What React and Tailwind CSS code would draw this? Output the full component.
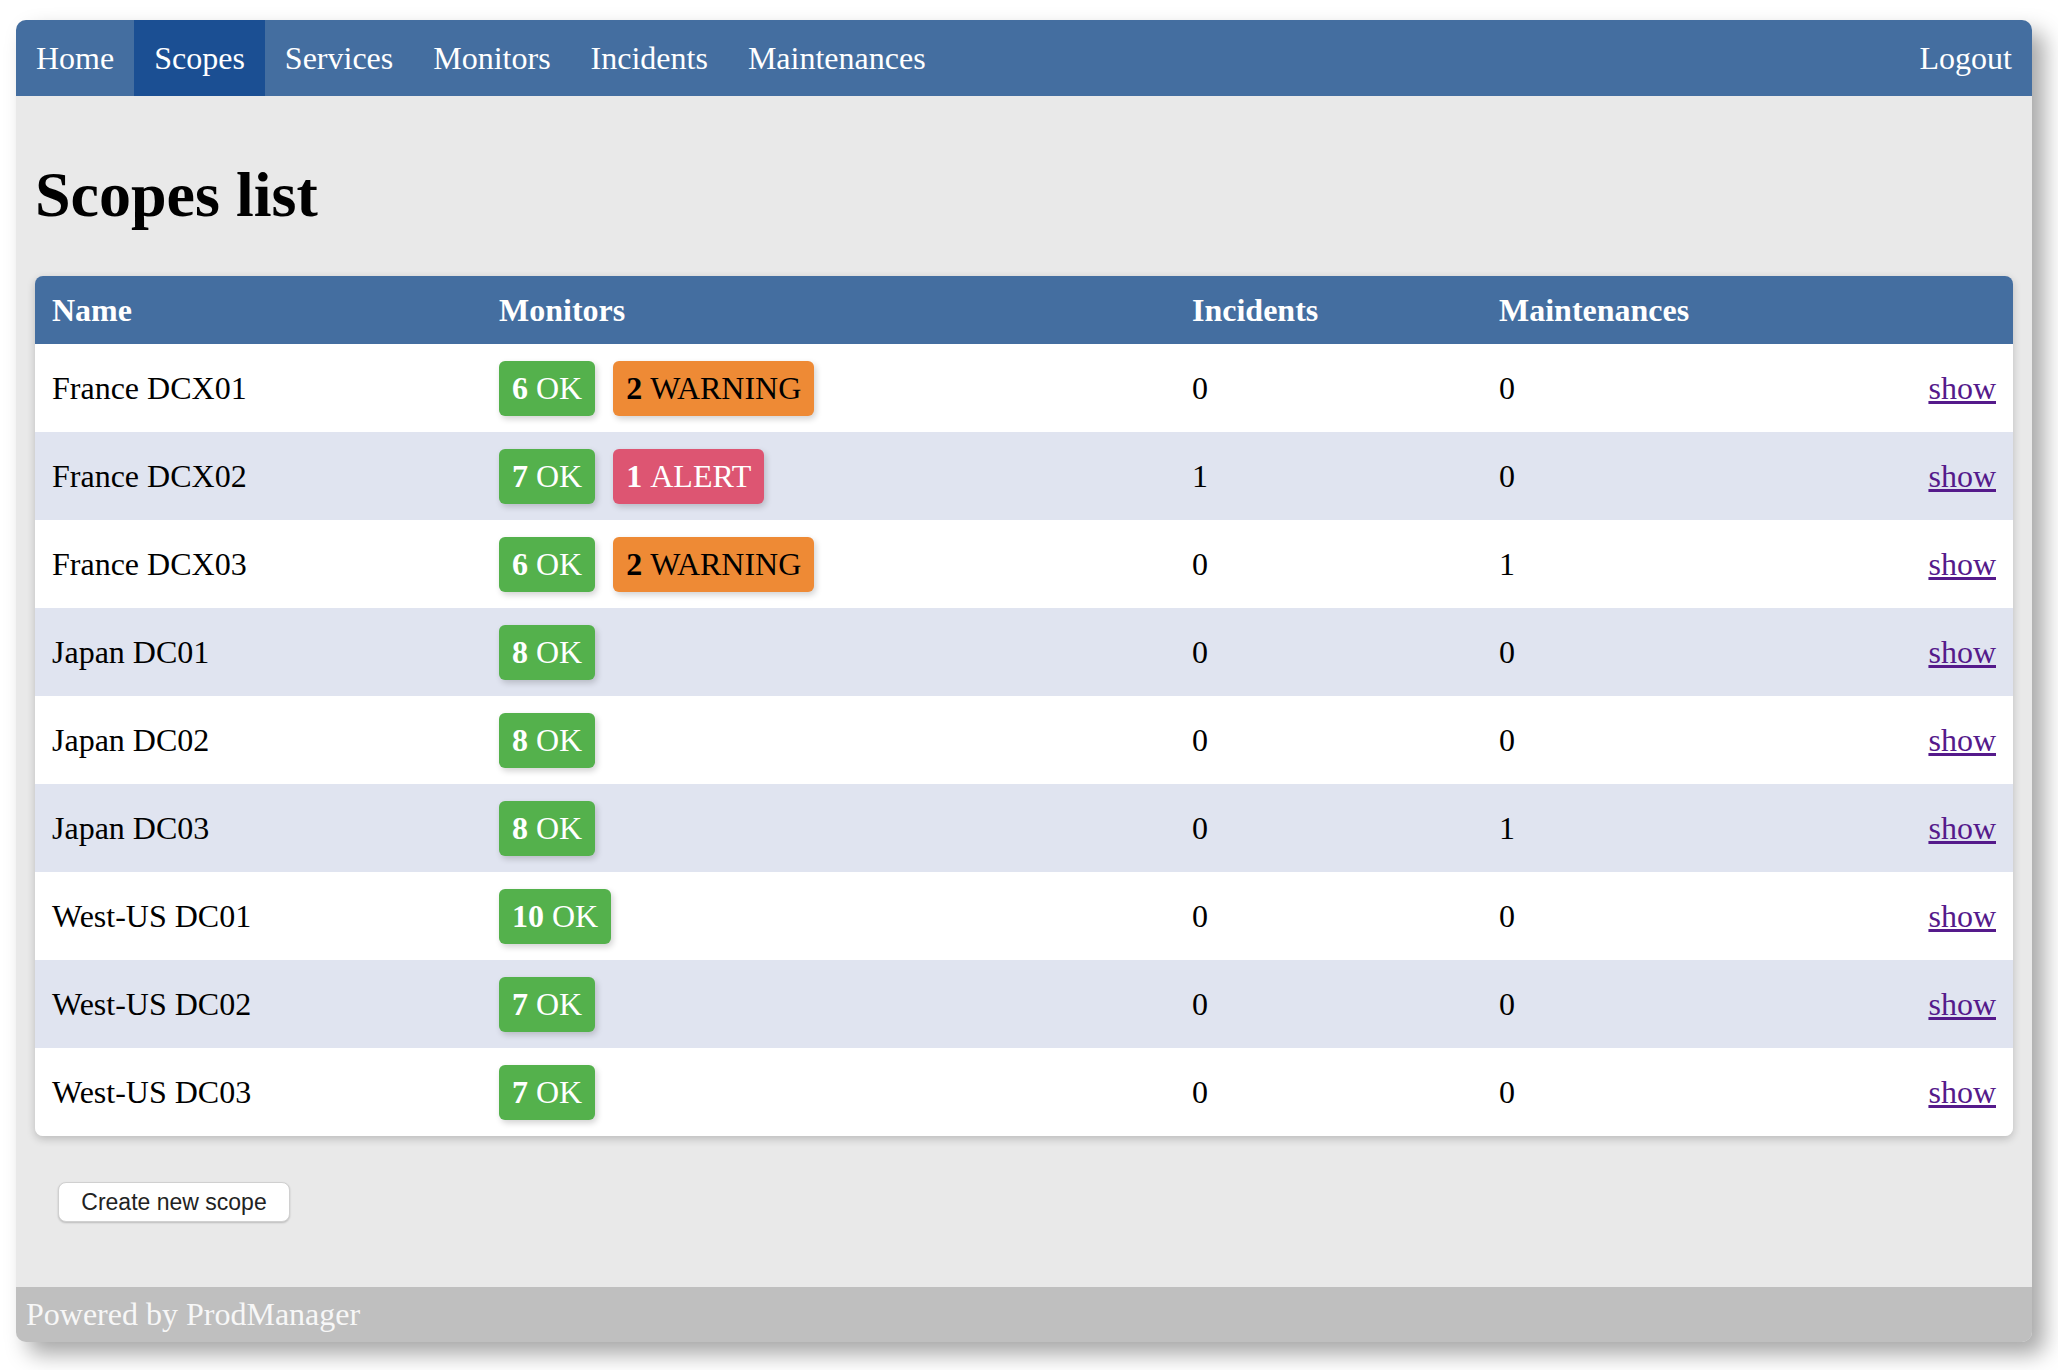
import React from 'react';

const navLinks = ['Home', 'Scopes', 'Services', 'Monitors', 'Incidents', 'Maintenances'];

const scopes = [
  { name: 'France DCX01', ok: 6, warn: 2, incidents: 0, maint: 0 },
  { name: 'France DCX02', ok: 7, alert: 1, incidents: 1, maint: 0 },
  { name: 'France DCX03', ok: 6, warn: 2, incidents: 0, maint: 1 },
  { name: 'Japan DC01', ok: 8, incidents: 0, maint: 0 },
  { name: 'Japan DC02', ok: 8, incidents: 0, maint: 0 },
  { name: 'Japan DC03', ok: 8, incidents: 0, maint: 1 },
  { name: 'West-US DC01', ok: 10, incidents: 0, maint: 0 },
  { name: 'West-US DC02', ok: 7, incidents: 0, maint: 0 },
  { name: 'West-US DC03', ok: 7, incidents: 0, maint: 0 },
];

function Badge({ count, label, color }) {
  return (
    <span className={`inline-flex items-center h-[55px] px-[13px] rounded-[6px] shadow-[2px_3px_6px_rgba(0,0,0,0.18)] ${color}`}>
      <b>{count}</b>&nbsp;{label}
    </span>
  );
}

export default function App() {
  return (
    <div className="min-h-[1370px] bg-white pt-[20px] pl-[16px]" style={{ fontFamily: '"Liberation Serif", "Times New Roman", serif' }}>
      <div className="w-[2016px] rounded-[10px] bg-[#e9e9e9] shadow-[12px_12px_22px_rgba(0,0,0,0.35)] overflow-hidden text-[32px]">

        {/* Nav */}
        <nav className="flex h-[76px] bg-[#446ea0] text-white">
          {navLinks.map((l) => (
            <a key={l} className={`flex items-center px-[20px] ${l === 'Scopes' ? 'bg-[#1b4f93]' : ''}`}>{l}</a>
          ))}
          <a className="ml-auto flex items-center px-[20px]">Logout</a>
        </nav>

        {/* Content */}
        <div className="px-[19px] pt-[20px] pb-[64px]">
          <h1 className="text-[64px] leading-[74px] font-bold mt-[42px] mb-[44px] text-black">Scopes list</h1>

          <table className="w-full table-fixed border-separate border-spacing-0 rounded-[8px] overflow-hidden shadow-[0_3px_8px_rgba(0,0,0,0.2)]">
            <colgroup>
              <col className="w-[447px]" />
              <col className="w-[693px]" />
              <col className="w-[307px]" />
              <col className="w-[300px]" />
              <col />
            </colgroup>
            <thead>
              <tr className="h-[68px] bg-[#446ea0] text-white text-left">
                <th className="pl-[17px] font-bold">Name</th>
                <th className="pl-[17px] font-bold">Monitors</th>
                <th className="pl-[17px] font-bold">Incidents</th>
                <th className="pl-[17px] font-bold">Maintenances</th>
                <th></th>
              </tr>
            </thead>
            <tbody>
              {scopes.map((s, i) => (
                <tr key={s.name} className={`h-[88px] ${i % 2 === 1 ? 'bg-[#e0e4f0]' : 'bg-white'}`}>
                  <td className="pl-[17px]">{s.name}</td>
                  <td className="pl-[17px]">
                    <div className="flex gap-[18px]">
                      <Badge count={s.ok} label="OK" color="bg-[#54b14c] text-white" />
                      {s.warn && <Badge count={s.warn} label="WARNING" color="bg-[#ee8a35] text-black" />}
                      {s.alert && <Badge count={s.alert} label="ALERT" color="bg-[#dd5572] text-white" />}
                    </div>
                  </td>
                  <td className="pl-[17px]">{s.incidents}</td>
                  <td className="pl-[17px]">{s.maint}</td>
                  <td className="pr-[17px] text-right">
                    <a href="#" className="text-[#551a8b] underline">show</a>
                  </td>
                </tr>
              ))}
            </tbody>
          </table>

          <button className="mt-[46px] ml-[23px] h-[40px] w-[232px] rounded-[8px] bg-white border border-[#d0d0d0] shadow-[0_1px_2px_rgba(0,0,0,0.2)] text-[23px] text-[#222]"
            style={{ fontFamily: '"Liberation Sans", Arial, sans-serif' }}>
            Create new scope
          </button>
        </div>

        {/* Footer */}
        <footer className="h-[55px] bg-[#bfbfbf] text-[#f7f7f7] flex items-center pl-[10px]">
          Powered by ProdManager
        </footer>
      </div>
    </div>
  );
}
